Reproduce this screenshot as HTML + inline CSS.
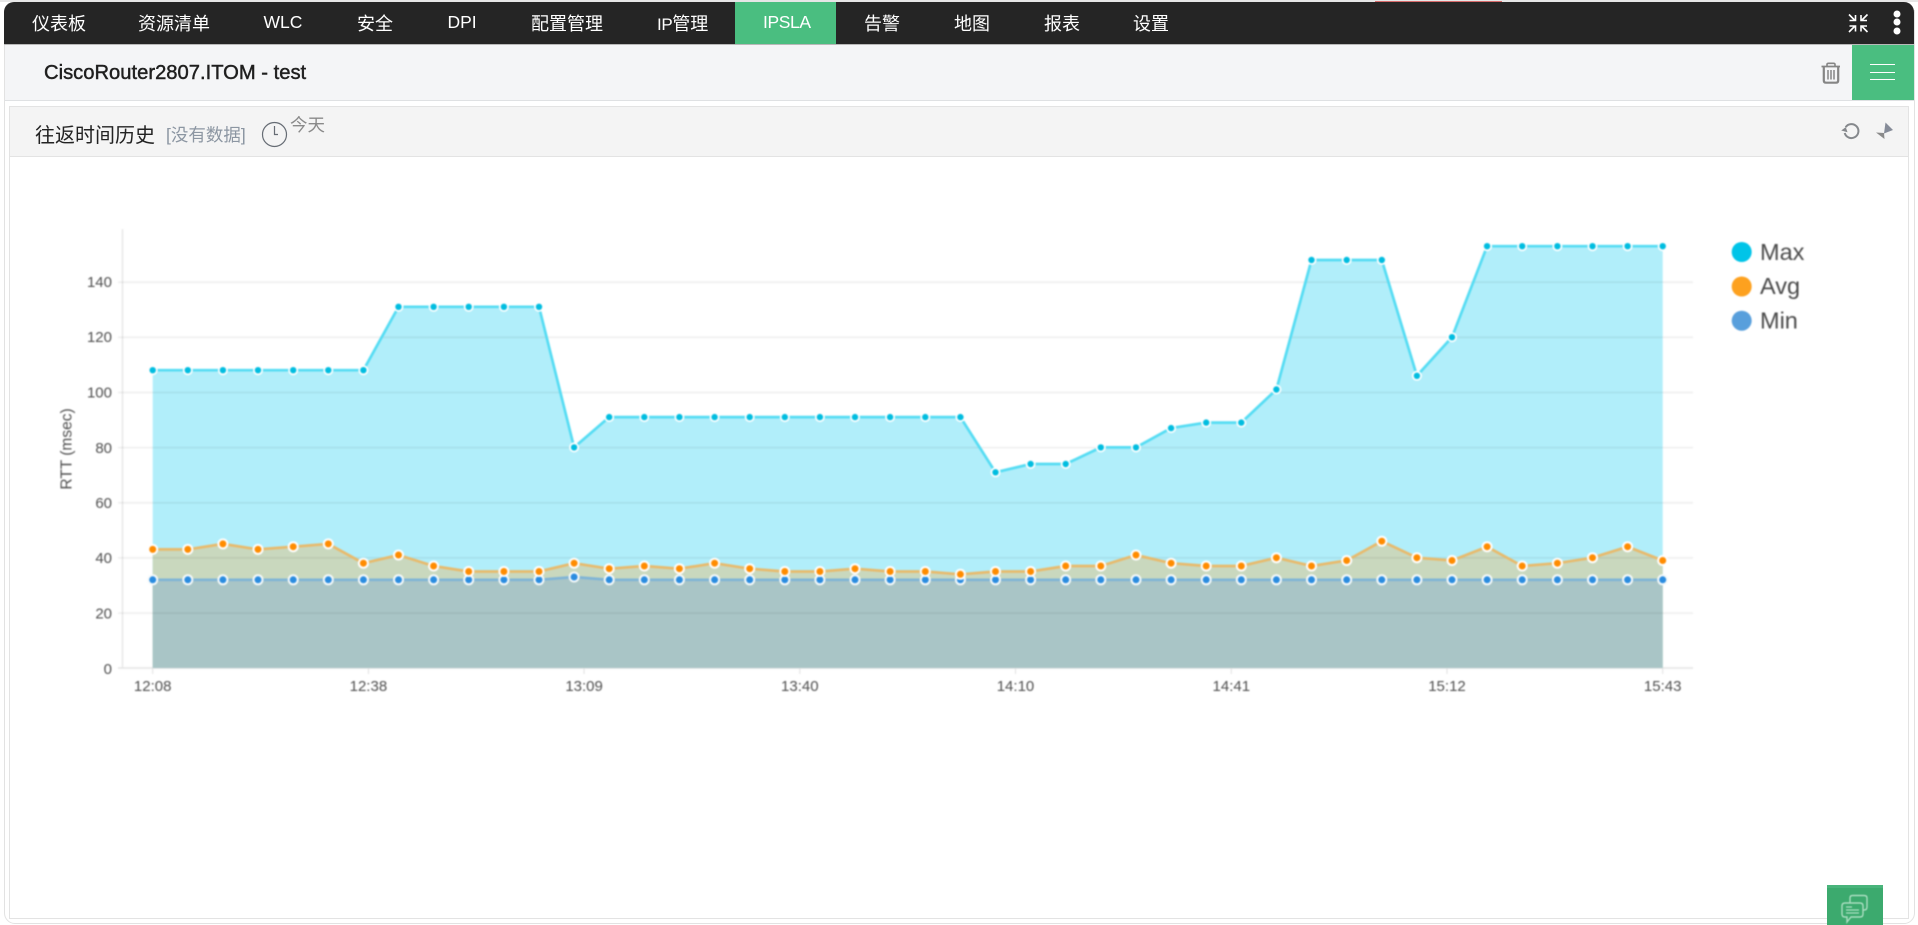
<!DOCTYPE html>
<html lang="zh">
<head>
<meta charset="utf-8">
<title>CiscoRouter2807.ITOM - test</title>
<style>
html,body{margin:0;padding:0;width:1918px;height:925px;overflow:hidden;background:#fff;font-family:"Liberation Sans","Noto Sans CJK SC",sans-serif}
#page{position:relative;width:1918px;height:925px;overflow:hidden}
.abs{position:absolute}
#strip{left:0;top:0;width:1918px;height:2px;background:#e6e6e6}
#red{left:1375px;top:1px;width:127px;height:1px;background:#d76a6a}
#frame{left:4px;top:10px;width:1909px;height:912px;border:1px solid #e2e2e2;border-radius:0 0 11px 11px;box-sizing:content-box}
#nav{left:4px;top:2px;width:1910px;height:42px;background:#252525;border-radius:10px 10px 0 0}
#navline{left:4px;top:44px;width:1910px;height:1px;background:#b8b8b8}
.n{position:absolute;color:#fff;font-size:18px;line-height:20px;top:14px;white-space:nowrap}
.l{font-size:17.5px;top:12px}
#active{left:735px;top:2px;width:101px;height:42px;background:#4abe80}
#head{left:5px;top:45px;width:1909px;height:55px;background:#f4f5f7}
#headline{left:5px;top:100px;width:1909px;height:1px;background:#dfe1e3}
#title{left:44px;top:61px;font-size:20.2px;line-height:24px;color:#1f1f1f;-webkit-text-stroke:.45px #1f1f1f;white-space:nowrap}
#menu{left:1852px;top:45px;width:62px;height:55px;background:#4abe80}
.b{position:absolute;left:18px;width:25px;height:1px;background:#fff}
#panel{left:9px;top:106px;width:1898px;height:811px;border:1px solid #e3e3e3;background:#fff}
#ptitle{left:10px;top:107px;width:1898px;height:49px;background:#f4f4f4;border-bottom:1px solid #e3e3e3}
#t1{left:35px;top:124px;font-size:20px;line-height:24px;color:#222;white-space:nowrap}
#t2{left:166px;top:123px;font-size:17.5px;line-height:24px;color:#8c96a2;white-space:nowrap}
#t3{left:290px;top:113px;font-size:17.5px;line-height:24px;color:#8a8a8a;white-space:nowrap}
svg{position:absolute;left:0;top:0;overflow:visible}
#chart{filter:blur(.85px)}
#chat{left:1827px;top:885px;width:56px;height:40px;background:#3caa6e;border-top:3px solid #49b47b;box-sizing:border-box}
</style>
</head>
<body>
<div id="page">
<div class="abs" id="strip"></div>
<div class="abs" id="red"></div>
<div class="abs" id="frame"></div>
<div class="abs" id="nav"></div>
<div class="abs" id="navline"></div>
<div class="abs" id="active"></div>
<span class="n" style="left:32px">仪表板</span>
<span class="n" style="left:138px">资源清单</span>
<span class="n l" style="left:263.500px">WLC</span>
<span class="n" style="left:357px">安全</span>
<span class="n l" style="left:447.500px">DPI</span>
<span class="n" style="left:531px">配置管理</span>
<span class="n" style="left:657px"><span style="font-size:17px;letter-spacing:-.4px">IP</span>管理</span>
<span class="n l" style="left:763px;letter-spacing:-.4px">IPSLA</span>
<span class="n" style="left:864px">告警</span>
<span class="n" style="left:954px">地图</span>
<span class="n" style="left:1044px">报表</span>
<span class="n" style="left:1133px">设置</span>

<div class="abs" id="head"></div>
<div class="abs" id="headline"></div>
<div class="abs" id="title">CiscoRouter2807.ITOM - test</div>
<div class="abs" id="menu">
<div class="b" style="top:19px"></div>
<div class="b" style="top:27px"></div>
<div class="b" style="top:34px"></div>
</div>

<div class="abs" id="panel"></div>
<div class="abs" id="ptitle"></div>
<div class="abs" id="t1">往返时间历史</div>
<div class="abs" id="t2">[没有数据]</div>
<div class="abs" id="t3">今天</div>

<svg width="1918" height="925" viewBox="0 0 1918 925" xmlns="http://www.w3.org/2000/svg">
<!-- compress arrows -->
<g fill="none" stroke="#fff" stroke-width="1.600">
<path d="M1849 14.500L1855 20.500M1849.500 20.500H1855.500V15"/>
<path d="M1867.500 14.500L1861.500 20.500M1867 20.500H1861V15"/>
<path d="M1849 32L1855 26M1849.500 26H1855.500V31.500"/>
<path d="M1867.500 32L1861.500 26M1867 26H1861V31.500"/>
</g>
<g fill="#fff">
<circle cx="1897" cy="14" r="3.500"/>
<circle cx="1897" cy="22" r="3.500"/>
<circle cx="1897" cy="31" r="3.500"/>
</g>
<!-- trash -->
<g fill="none" stroke="#858585">
<path d="M1821.500 66.500H1840" stroke-width="1.800"/>
<path d="M1827 66V64.500Q1827 63.300 1828.500 63.300H1833.500Q1835 63.300 1835 64.500V66" stroke-width="1.600"/>
<path d="M1823.800 67V80.500Q1823.800 82.700 1826 82.700H1836Q1838.200 82.700 1838.200 80.500V67" stroke-width="2.200"/>
<path d="M1828 70V79.500M1831 70V79.500M1834 70V79.500" stroke-width="1.500"/>
</g>
<!-- clock -->
<g fill="none" stroke="#666c74" stroke-width="1.200">
<circle cx="274.500" cy="134.500" r="12"/>
<path d="M274.500 126V134.500H278"/>
</g>
<!-- refresh -->
<g fill="none" stroke="#85888c" stroke-width="2">
<path d="M1845.600 127.200A7 7 0 1 1 1844.700 133"/>
</g>
<path d="M1841.500 131.500L1848 131.500L1845 127Z" fill="#85888c" transform="rotate(15 1845 130)"/>
<!-- collapse -->
<path d="M1885.500 122.500L1893 130L1884 133.500Z" fill="#858b98"/>
<path d="M1876 132.500L1884 133L1884.500 139Z" fill="#8a8a8a"/>

<defs>
<marker id="mMax" markerUnits="userSpaceOnUse" markerWidth="14" markerHeight="14" refX="7" refY="7"><circle cx="7" cy="7" r="5" fill="#fff"/><circle cx="7" cy="7" r="3.200" fill="#00bde0"/></marker>
<marker id="mAvg" markerUnits="userSpaceOnUse" markerWidth="14" markerHeight="14" refX="7" refY="7"><circle cx="7" cy="7" r="5.500" fill="#fff"/><circle cx="7" cy="7" r="3.500" fill="#ff8c00"/></marker>
<marker id="mMin" markerUnits="userSpaceOnUse" markerWidth="14" markerHeight="14" refX="7" refY="7"><circle cx="7" cy="7" r="5.500" fill="#f6fafb"/><circle cx="7" cy="7" r="3.500" fill="#2a8ce0"/></marker>
</defs>

<g id="chart">
<!-- axes -->
<path d="M122.500 229V668" stroke="#e8e8e8" stroke-width="1.500" fill="none"/>
<path d="M152.700 668V674M368.400 668V674M584.100 668V674M799.800 668V674M1015.500 668V674M1231.300 668V674M1447 668V674M1662.700 668V674" stroke="#e0e0e0" stroke-width="1"/>
<path d="M118 668H1693" stroke="#e4e4e4" stroke-width="1.500"/>
<!-- areas -->
<polygon fill="#b1eefa" points="152.700,668 152.700,370.200 187.800,370.200 222.900,370.200 258,370.200 293.200,370.200 328.300,370.200 363.400,370.200 398.500,306.800 433.600,306.800 468.700,306.800 503.900,306.800 539,306.800 574.100,447.400 609.200,417.100 644.300,417.100 679.400,417.100 714.600,417.100 749.700,417.100 784.800,417.100 819.900,417.100 855,417.100 890.100,417.100 925.300,417.100 960.400,417.100 995.500,472.300 1030.600,464 1065.700,464 1100.800,447.400 1136,447.400 1171.100,428.100 1206.200,422.600 1241.300,422.600 1276.400,389.500 1311.500,260 1346.700,260 1381.800,260 1416.900,375.800 1452,337.200 1487.100,246.200 1522.200,246.200 1557.400,246.200 1592.500,246.200 1627.600,246.200 1662.700,246.200 1662.700,668"/>
<polygon fill="#c9d8be" points="152.700,668 152.700,549.400 187.800,549.400 222.900,543.900 258,549.400 293.200,546.700 328.300,543.900 363.400,563.200 398.500,555 433.600,566 468.700,571.500 503.900,571.500 539,571.500 574.100,563.200 609.200,568.700 644.300,566 679.400,568.700 714.600,563.200 749.700,568.700 784.800,571.500 819.900,571.500 855,568.700 890.100,571.500 925.300,571.500 960.400,574.300 995.500,571.500 1030.600,571.500 1065.700,566 1100.800,566 1136,555 1171.100,563.200 1206.200,566 1241.300,566 1276.400,557.700 1311.500,566 1346.700,560.500 1381.800,541.200 1416.900,557.700 1452,560.500 1487.100,546.700 1522.200,566 1557.400,563.200 1592.500,557.700 1627.600,546.700 1662.700,560.500 1662.700,668"/>
<polygon fill="#a9c5c6" points="152.700,668 152.700,579.800 539,579.800 574.100,577 609.200,579.800 1662.700,579.800 1662.700,668"/>
<!-- grid -->
<path d="M118 613.100H1693M118 557.900H1693M118 502.800H1693M118 447.600H1693M118 392.500H1693M118 337.300H1693M118 282.200H1693" stroke="#000" stroke-opacity=".06" stroke-width="1.800" fill="none"/>
<!-- lines -->
<polyline fill="none" stroke="#55dcf3" stroke-width="2.700" marker-start="url(#mMax)" marker-mid="url(#mMax)" marker-end="url(#mMax)" points="152.700,370.200 187.800,370.200 222.900,370.200 258,370.200 293.200,370.200 328.300,370.200 363.400,370.200 398.500,306.800 433.600,306.800 468.700,306.800 503.900,306.800 539,306.800 574.100,447.400 609.200,417.100 644.300,417.100 679.400,417.100 714.600,417.100 749.700,417.100 784.800,417.100 819.900,417.100 855,417.100 890.100,417.100 925.300,417.100 960.400,417.100 995.500,472.300 1030.600,464 1065.700,464 1100.800,447.400 1136,447.400 1171.100,428.100 1206.200,422.600 1241.300,422.600 1276.400,389.500 1311.500,260 1346.700,260 1381.800,260 1416.900,375.800 1452,337.200 1487.100,246.200 1522.200,246.200 1557.400,246.200 1592.500,246.200 1627.600,246.200 1662.700,246.200"/>
<polyline fill="none" stroke="#7fb4d6" stroke-width="2.700" marker-start="url(#mMin)" marker-mid="url(#mMin)" marker-end="url(#mMin)" points="152.700,579.800 187.800,579.800 222.900,579.800 258,579.800 293.200,579.800 328.300,579.800 363.400,579.800 398.500,579.800 433.600,579.800 468.700,579.800 503.900,579.800 539,579.800 574.100,577 609.200,579.800 644.300,579.800 679.400,579.800 714.600,579.800 749.700,579.800 784.800,579.800 819.900,579.800 855,579.800 890.100,579.800 925.300,579.800 960.400,579.800 995.500,579.800 1030.600,579.800 1065.700,579.800 1100.800,579.800 1136,579.800 1171.100,579.800 1206.200,579.800 1241.300,579.800 1276.400,579.800 1311.500,579.800 1346.700,579.800 1381.800,579.800 1416.900,579.800 1452,579.800 1487.100,579.800 1522.200,579.800 1557.400,579.800 1592.500,579.800 1627.600,579.800 1662.700,579.800"/>
<polyline fill="none" stroke="#e8ba6c" stroke-width="2.700" marker-start="url(#mAvg)" marker-mid="url(#mAvg)" marker-end="url(#mAvg)" points="152.700,549.400 187.800,549.400 222.900,543.900 258,549.400 293.200,546.700 328.300,543.900 363.400,563.200 398.500,555 433.600,566 468.700,571.500 503.900,571.500 539,571.500 574.100,563.200 609.200,568.700 644.300,566 679.400,568.700 714.600,563.200 749.700,568.700 784.800,571.500 819.900,571.500 855,568.700 890.100,571.500 925.300,571.500 960.400,574.300 995.500,571.500 1030.600,571.500 1065.700,566 1100.800,566 1136,555 1171.100,563.200 1206.200,566 1241.300,566 1276.400,557.700 1311.500,566 1346.700,560.500 1381.800,541.200 1416.900,557.700 1452,560.500 1487.100,546.700 1522.200,566 1557.400,563.200 1592.500,557.700 1627.600,546.700 1662.700,560.500"/>
<!-- labels -->
<g font-family="'Liberation Sans',sans-serif" font-size="15" fill="#4f4f4f" text-anchor="end">
<text x="112" y="287">140</text>
<text x="112" y="342">120</text>
<text x="112" y="397.500">100</text>
<text x="112" y="453">80</text>
<text x="112" y="508">60</text>
<text x="112" y="563">40</text>
<text x="112" y="618.500">20</text>
<text x="112" y="674">0</text>
</g>
<g font-family="'Liberation Sans',sans-serif" font-size="15" fill="#4f4f4f" text-anchor="middle">
<text x="152.700" y="691">12:08</text>
<text x="368.400" y="691">12:38</text>
<text x="584.100" y="691">13:09</text>
<text x="799.800" y="691">13:40</text>
<text x="1015.500" y="691">14:10</text>
<text x="1231.300" y="691">14:41</text>
<text x="1447" y="691">15:12</text>
<text x="1662.700" y="691">15:43</text>
<text transform="translate(71.500 449) rotate(-90)" font-size="15.500">RTT (msec)</text>
</g>
<!-- legend -->
<circle cx="1741.700" cy="252" r="10" fill="#00c4e8"/>
<circle cx="1741.700" cy="286.500" r="10" fill="#fda11f"/>
<circle cx="1741.700" cy="320.700" r="10" fill="#589fdc"/>
<g font-family="'Liberation Sans',sans-serif" font-size="23.500" fill="#4a4a4a">
<text x="1760" y="260">Max</text>
<text x="1760" y="294">Avg</text>
<text x="1760" y="328.500">Min</text>
</g>
</g>
</svg>

<div class="abs" id="chat"></div>
<svg width="1918" height="925" viewBox="0 0 1918 925" xmlns="http://www.w3.org/2000/svg" style="filter:blur(.4px)">
<g fill="none" stroke="#a8dcbf" stroke-width="1.400">
<path d="M1850 903V898Q1850 895.500 1852.500 895.500H1864Q1867 895.500 1867 898V907Q1867 910 1864 910H1863"/>
<path d="M1845 903H1860Q1863 903 1863 906V914Q1863 917 1860 917H1851L1847 922V917H1845Q1842 917 1842 914V906Q1842 903 1845 903Z"/>
<path d="M1846 907H1852M1846 910H1859M1846 913H1859" stroke-width="1.200"/>
</g>
</svg>
</div>
</body>
</html>
